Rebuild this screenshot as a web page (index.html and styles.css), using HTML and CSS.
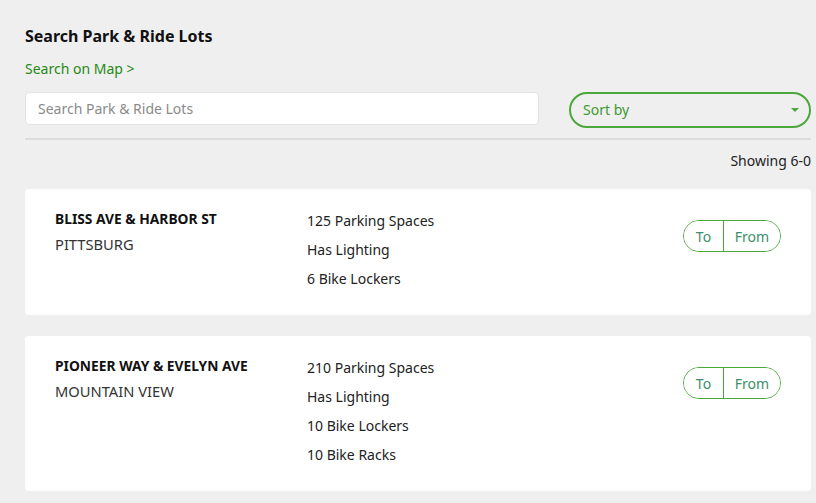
FILE: index.html
```html
<!DOCTYPE html>
<html lang="en">
<head>
    <meta charset="UTF-8">
    <meta name="viewport" content="width=device-width, initial-scale=1.0">
    <title>Search Park &amp; Ride Lots</title>
    <link rel="stylesheet" href="styles.css">
</head>
<body>
<div class="page">
    <h1 class="title">Search Park &amp; Ride Lots</h1>
    <a class="map-link" href="#">Search on Map &gt;</a>

    <div class="search-row">
        <input class="search-input" type="text" placeholder="Search Park &amp; Ride Lots">
        <div class="sort-select">
            <span>Sort by</span>
            <span class="caret"></span>
        </div>
    </div>

    <div class="results-count">Showing 6-0</div>

    <div class="lot-card">
        <div class="lot-name">
            <div class="lot-street">BLISS AVE &amp; HARBOR ST</div>
            <div class="lot-city">PITTSBURG</div>
        </div>
        <ul class="lot-features">
            <li>125 Parking Spaces</li>
            <li>Has Lighting</li>
            <li>6 Bike Lockers</li>
        </ul>
        <div class="direction-toggle">
            <button class="dir-btn dir-to">To</button>
            <button class="dir-btn dir-from">From</button>
        </div>
    </div>

    <div class="lot-card">
        <div class="lot-name">
            <div class="lot-street">PIONEER WAY &amp; EVELYN AVE</div>
            <div class="lot-city">MOUNTAIN VIEW</div>
        </div>
        <ul class="lot-features">
            <li>210 Parking Spaces</li>
            <li>Has Lighting</li>
            <li>10 Bike Lockers</li>
            <li>10 Bike Racks</li>
        </ul>
        <div class="direction-toggle">
            <button class="dir-btn dir-to">To</button>
            <button class="dir-btn dir-from">From</button>
        </div>
    </div>
</div>
</body>
</html>
```

FILE: styles.css
```css
body {
    margin: 0;
    background-color: #f0eff0;
    font-family: "Noto Sans", "Open Sans", sans-serif;
    color: #222;
}

.page {
    padding: 25px 5px 0 25px;
}

.title {
    margin: 0;
    font-size: 16px;
    font-weight: bold;
    line-height: 22px;
    color: #111;
}

.map-link {
    display: block;
    width: max-content;
    margin-top: 12px;
    font-size: 14px;
    line-height: 20px;
    color: #1f8a12;
    text-decoration: none;
}

.search-row {
    display: flex;
    align-items: flex-start;
    margin-top: 13px;
    padding-bottom: 10px;
    border-bottom: 2px solid #dcdcdc;
}

.search-input {
    width: 514px;
    height: 33px;
    box-sizing: border-box;
    padding: 0 12px;
    border: 1px solid #e2e2e2;
    border-radius: 4px;
    background: #fff;
    font-family: inherit;
    font-size: 14px;
    color: #333;
    outline: none;
}

.search-input::placeholder {
    color: #8a8a8a;
}

.sort-select {
    display: flex;
    align-items: center;
    justify-content: space-between;
    width: 242px;
    height: 36px;
    box-sizing: border-box;
    margin-left: 30px;
    padding: 0 10px 1px 12px;
    border: 2px solid #4aa83a;
    border-radius: 18px;
    font-size: 14px;
    color: #3d9a2e;
}

.caret {
    width: 0;
    height: 0;
    border-left: 4px solid transparent;
    border-right: 4px solid transparent;
    border-top: 4px solid #4aa83a;
}

.results-count {
    margin-top: 11px;
    text-align: right;
    font-size: 14px;
    line-height: 20px;
    color: #222;
}

.lot-card {
    display: flex;
    align-items: flex-start;
    margin-top: 18px;
    padding: 17px 30px 22px 30px;
    background: #fff;
    border-radius: 4px;
}

.lot-card + .lot-card {
    margin-top: 21px;
}

.lot-name {
    width: 252px;
    padding-top: 4px;
}

.lot-street {
    font-size: 13.8px;
    font-weight: bold;
    line-height: 18px;
    color: #111;
}

.lot-city {
    margin-top: 6px;
    font-size: 14.7px;
    line-height: 20px;
    color: #333;
}

.lot-features {
    flex: 1;
    margin: 0;
    padding: 0;
    list-style: none;
    font-size: 14px;
    line-height: 29px;
    color: #222;
}

.direction-toggle {
    display: flex;
    margin-top: 14px;
    border: 1px solid #4aa83a;
    border-radius: 16px;
    overflow: hidden;
}

.dir-btn {
    height: 30px;
    padding: 0;
    border: none;
    background: #fff;
    font-family: inherit;
    font-size: 14px;
    color: #3d8f6a;
    cursor: pointer;
}

.dir-to {
    width: 40px;
    border-right: 1px solid #4aa83a;
}

.dir-from {
    width: 56px;
}
```
